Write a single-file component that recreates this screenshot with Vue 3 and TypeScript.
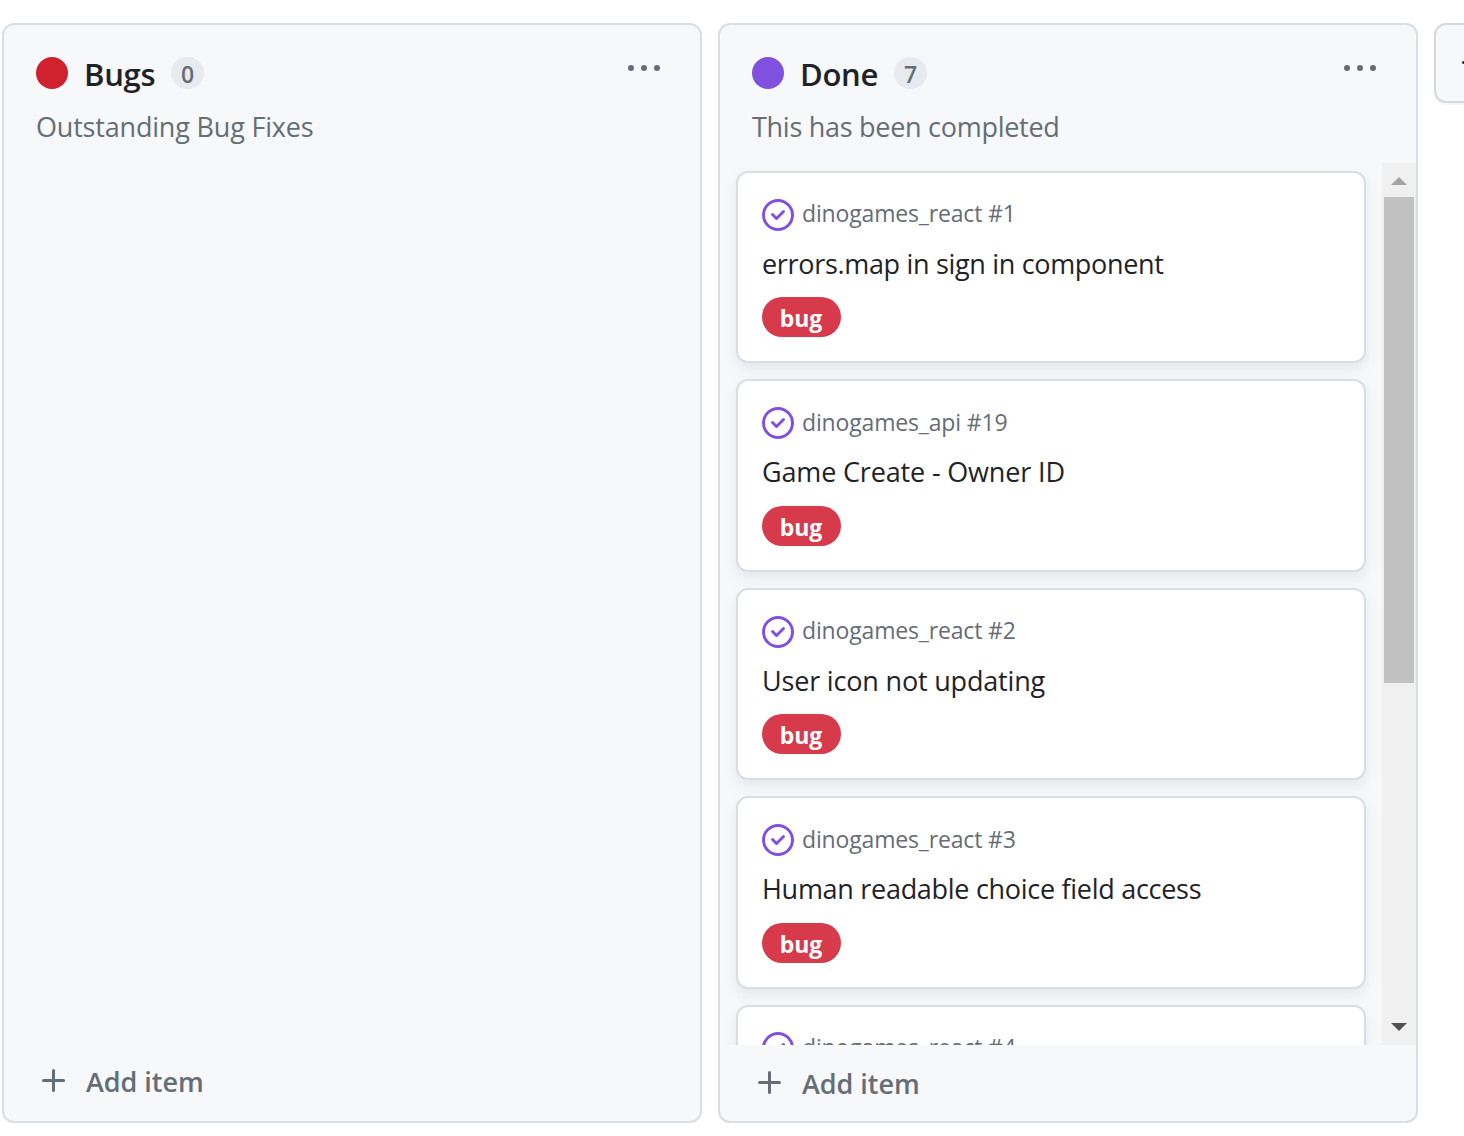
<script setup lang="ts">
interface Card {
  repo: string
  title?: string
  label?: string
  tracking?: number
}

interface Column {
  name: string
  count: number
  description: string
  tone: string
  cards: Card[]
}

const columns: Column[] = [
  { name: 'Bugs', count: 0, description: 'Outstanding Bug Fixes', tone: 'red', cards: [] },
  {
    name: 'Done',
    count: 7,
    description: 'This has been completed',
    tone: 'purple',
    cards: [
      { repo: 'dinogames_react #1', title: 'errors.map in sign in component', label: 'bug', tracking: -0.32 },
      { repo: 'dinogames_api #19', title: 'Game Create - Owner ID', label: 'bug', tracking: -0.16 },
      { repo: 'dinogames_react #2', title: 'User icon not updating', label: 'bug', tracking: -0.18 },
      { repo: 'dinogames_react #3', title: 'Human readable choice field access', label: 'bug', tracking: -0.29 },
      { repo: 'dinogames_react #4' },
    ],
  },
]
</script>

<template>
  <main class="board">
    <section v-for="col in columns" :key="col.name" class="column" :class="col.tone">
      <header class="head">
        <div class="head-row">
          <span class="dot"></span>
          <h2 class="name">{{ col.name }}</h2>
          <span class="count">{{ col.count }}</span>
          <svg class="menu" width="32" height="6" viewBox="0 0 32 6">
            <circle cx="3" cy="3" r="3" />
            <circle cx="16" cy="3" r="3" />
            <circle cx="29" cy="3" r="3" />
          </svg>
        </div>
        <p class="desc">{{ col.description }}</p>
      </header>

      <div class="body">
        <div class="cards">
          <article v-for="card in col.cards" :key="card.repo" class="card">
            <div class="meta">
              <svg class="check" width="32" height="32" viewBox="0 0 16 16">
                <path d="M11.28 6.78a.75.75 0 00-1.06-1.06L7.25 8.69 5.78 7.22a.75.75 0 00-1.06 1.06l2 2a.75.75 0 001.06 0l3.5-3.5z" />
                <path fill-rule="evenodd" d="M16 8A8 8 0 110 8a8 8 0 0116 0zm-1.5 0a6.5 6.5 0 11-13 0 6.5 6.5 0 0113 0z" />
              </svg>
              <span class="repo">{{ card.repo }}</span>
            </div>
            <h3 v-if="card.title" class="title" :style="{ letterSpacing: `${card.tracking ?? 0}px` }">{{ card.title }}</h3>
            <span v-if="card.label" class="label">{{ card.label }}</span>
          </article>
        </div>
        <div v-if="col.cards.length" class="scrollbar">
          <svg class="arrow up" width="16" height="8" viewBox="0 0 16 8"><path d="M0 8L8 0l8 8z" /></svg>
          <div class="thumb"></div>
          <svg class="arrow down" width="16" height="8" viewBox="0 0 16 8"><path d="M0 0h16L8 8z" /></svg>
        </div>
      </div>

      <footer class="foot">
        <svg class="plus" width="23" height="23" viewBox="0 0 23 23">
          <path d="M11.5 1.5v20M1.5 11.5h20" />
        </svg>
        <span class="add">Add item</span>
      </footer>
    </section>

    <button class="new-column" type="button">
      <svg class="plus" width="23" height="23" viewBox="0 0 23 23">
        <path d="M11.5 1.5v20M1.5 11.5h20" />
      </svg>
    </button>
  </main>
</template>

<style>
body {
  overflow: hidden;
  background: #fff;
}
</style>

<style scoped>
.board {
  box-sizing: border-box;
  display: flex;
  align-items: flex-start;
  gap: 16px;
  width: 1464px;
  height: 1136px;
  padding: 23px 0 0 2px;
  overflow: hidden;
  font-family: "Open Sans", "Noto Sans", sans-serif;
  color: #1f2328;
}

.column {
  box-sizing: border-box;
  flex: none;
  display: flex;
  flex-direction: column;
  width: 700px;
  height: 1100px;
  border: 2px solid #d8dee4;
  border-radius: 12px;
  background: #f6f8fa;
  overflow: hidden;
}

.head {
  box-sizing: border-box;
  flex: none;
  height: 138px;
  padding: 32px 40px 0 32px;
}

.head-row {
  display: flex;
  align-items: flex-start;
  height: 32px;
}

.dot {
  width: 32px;
  height: 32px;
  border-radius: 50%;
}

.red .dot {
  background: #cf222e;
}

.purple .dot {
  background: #8250df;
}

.name {
  margin: 0 0 0 16px;
  font-size: 31px;
  font-weight: 600;
  line-height: 34px;
  white-space: nowrap;
}

.red .name {
  width: 71px;
  letter-spacing: -0.3px;
}

.purple .name {
  width: 78px;
  letter-spacing: -0.3px;
}

.count {
  width: 33px;
  height: 32px;
  margin-left: 16px;
  border-radius: 16px;
  background: #e7ebef;
  color: #656d76;
  font-size: 23px;
  font-weight: 600;
  line-height: 34px;
  text-align: center;
}

.menu {
  margin: 8px 0 0 auto;
  fill: #656d76;
}

.desc {
  margin: 17px 0 0;
  font-size: 27px;
  line-height: 42px;
  letter-spacing: -0.19px;
  color: #656d76;
  white-space: nowrap;
}

.purple .desc {
  letter-spacing: -0.28px;
}

.body {
  flex: 1;
  display: flex;
  min-height: 0;
  overflow: hidden;
}

.cards {
  flex: 1;
  display: flex;
  flex-direction: column;
  gap: 16px;
  padding: 8px 16px 0;
}

.card {
  box-sizing: border-box;
  flex: none;
  height: 192.4px;
  padding: 26px 24px 0;
  border: 2px solid #d8dee4;
  border-radius: 12px;
  background: #fff;
  box-shadow: 0 6px 12px rgba(140, 149, 159, 0.15);
}

.meta {
  display: flex;
  gap: 8px;
  height: 32px;
}

.check {
  flex: none;
  margin-top: -0.2px;
  fill: #8250df;
}

.repo {
  margin-top: 0.35px;
  font-size: 23px;
  line-height: 28.4px;
  letter-spacing: -0.16px;
  color: #656d76;
  white-space: nowrap;
}

.title {
  height: 42px;
  margin: 11.75px 0 12.65px;
  font-size: 27px;
  font-weight: 400;
  line-height: 42px;
  white-space: nowrap;
}

.label {
  box-sizing: border-box;
  display: block;
  width: 79px;
  height: 40px;
  padding-right: 1px;
  border-radius: 20px;
  background: #d73a4a;
  color: #fff;
  font-size: 23px;
  font-weight: 700;
  line-height: 42px;
  letter-spacing: -0.1px;
  text-align: center;
}

.scrollbar {
  flex: none;
  display: flex;
  flex-direction: column;
  align-items: center;
  width: 34px;
  background: #f0f0f0;
}

.arrow.up {
  margin: 14px 0 12px;
  fill: #a3a3a3;
}

.arrow.down {
  margin: auto 0 14px;
  fill: #505050;
}

.thumb {
  width: 30px;
  height: 486px;
  background: #c1c1c1;
}

.foot {
  box-sizing: border-box;
  flex: none;
  display: flex;
  align-items: flex-start;
  height: 76px;
  padding: 26px 0 0 38px;
}

.red .foot {
  height: 78px;
}

.plus {
  flex: none;
  fill: none;
  stroke: #656d76;
  stroke-width: 3;
  stroke-linecap: round;
}

.add {
  margin-left: 21px;
  margin-top: -8px;
  font-size: 27px;
  font-weight: 600;
  line-height: 42px;
  letter-spacing: -0.05px;
  color: #656d76;
  white-space: nowrap;
}

.new-column {
  box-sizing: border-box;
  flex: none;
  width: 80px;
  height: 80px;
  padding: 0 0 2px 26px;
  display: flex;
  align-items: center;
  border: 2px solid #d5d8dc;
  border-radius: 12px;
  background: #f6f8fa;
  box-shadow: 0 2px 0 rgba(31, 35, 40, 0.04);
}

.new-column .plus {
  stroke: #24292f;
}
</style>
